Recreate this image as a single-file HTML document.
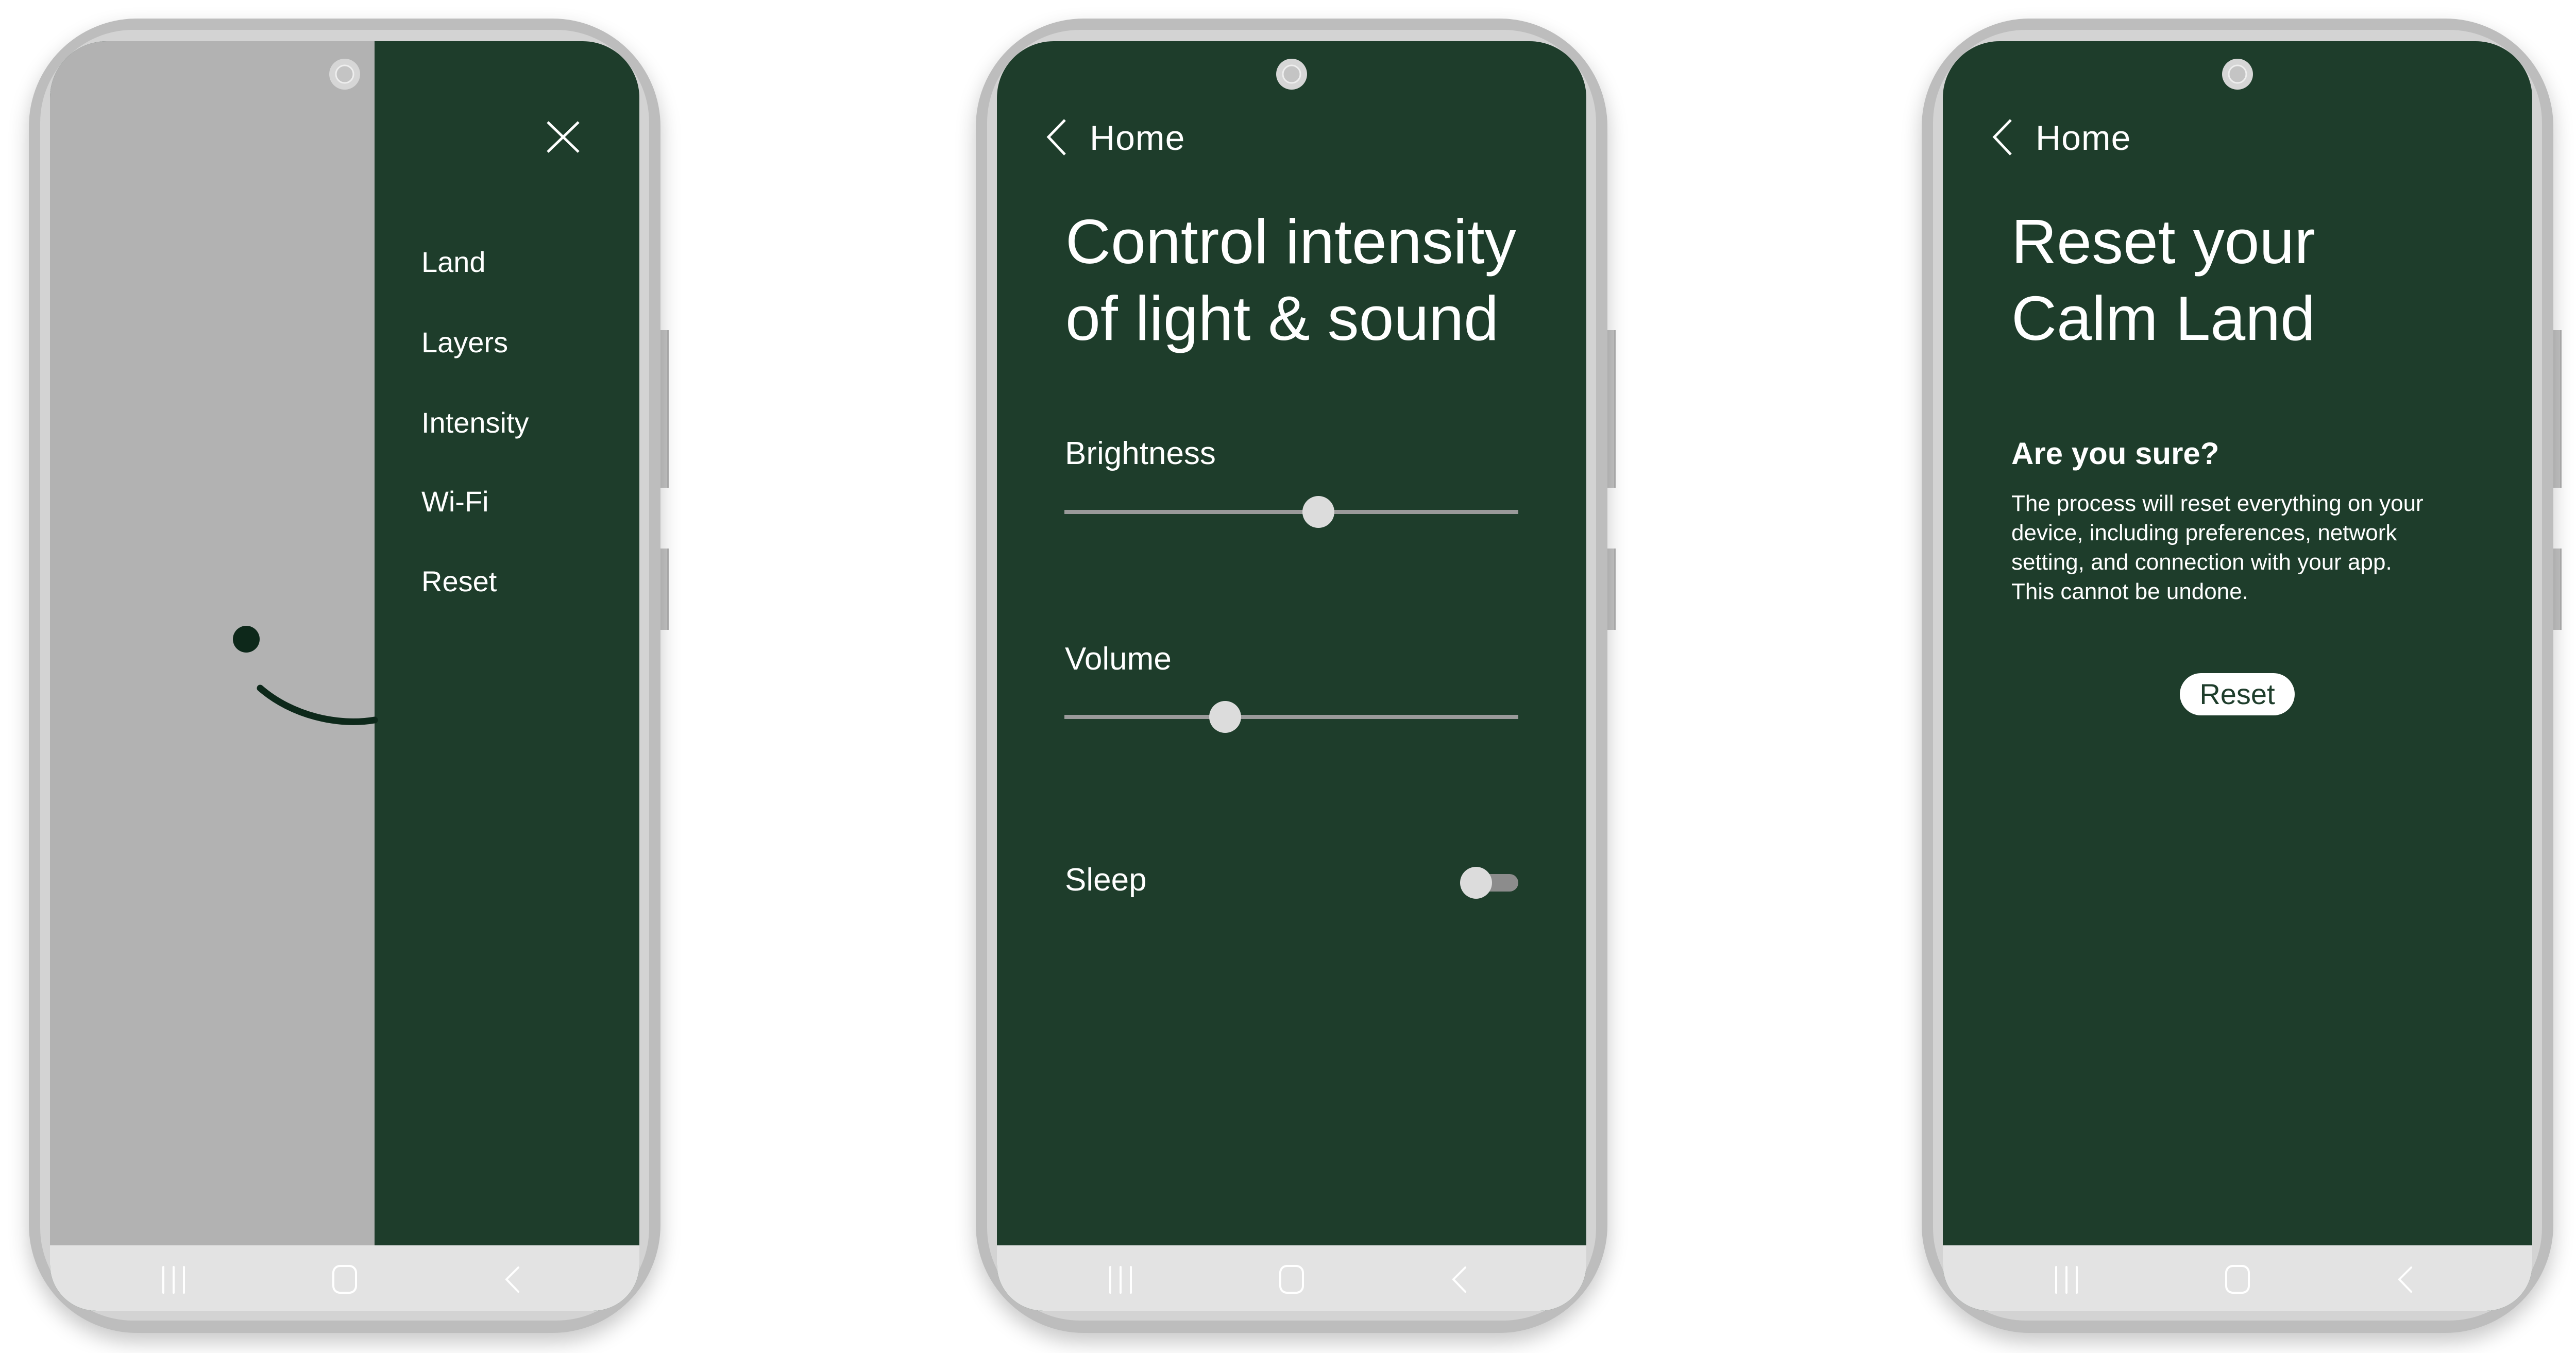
<!DOCTYPE html>
<html><head><meta charset="utf-8"><style>
*{margin:0;padding:0;box-sizing:border-box}
body{width:5021px;height:2627px;background:#fff;position:relative;overflow:hidden;font-family:"Liberation Sans",sans-serif}
.ph{position:absolute;top:0;width:1340px;height:2627px}
.ab{position:absolute}
.outer{left:56px;top:36px;width:1226px;height:2552px;border-radius:210px;background:#bdbdbd;box-shadow:0 18px 40px rgba(0,0,0,.22)}
.ring{left:78px;top:58px;width:1182px;height:2506px;border-radius:180px;background:#d3d3d3}
.btn{left:1280px;width:18px;background:#c4c4c4;border-right:3px solid #b0b0b0}
.screen{left:97px;top:80px;width:1144px;height:2465px;border-radius:110px 110px 90px 90px;overflow:hidden;background:#1e3d2b}
.nav{left:0;top:2338px;width:1144px;height:127px;background:#e3e3e3}
.w{color:#fff;white-space:nowrap}
</style></head><body>

<!-- PHONE 1 -->
<div class="ph" style="left:0">
  <div class="ab btn" style="top:641px;height:306px"></div>
  <div class="ab btn" style="top:1065px;height:158px"></div>
  <div class="ab outer"></div>
  <div class="ab ring"></div>
  <div class="ab screen">
    <div class="ab" style="left:0;top:0;width:630px;height:2338px;background:#b2b2b2"></div>
    <svg class="ab" style="left:0;top:0" width="1144" height="2338">
      <circle cx="381" cy="1161" r="26" fill="#0d281a"/>
      <path d="M408,1256 C470,1310 560,1330 630,1318" stroke="#0d281a" stroke-width="13" fill="none" stroke-linecap="round"/>
      <path d="M966,157 L1026,215 M1026,157 L966,215" stroke="#fff" stroke-width="5"/>
    </svg>
    <div class="ab w" style="left:721px;top:401px;font-size:56px;line-height:56px">Land</div>
    <div class="ab w" style="left:721px;top:557px;font-size:56px;line-height:56px">Layers</div>
    <div class="ab w" style="left:721px;top:713px;font-size:56px;line-height:56px">Intensity</div>
    <div class="ab w" style="left:721px;top:866px;font-size:56px;line-height:56px">Wi-Fi</div>
    <div class="ab w" style="left:721px;top:1021px;font-size:56px;line-height:56px">Reset</div>
    <div class="ab nav"></div>
    <svg class="ab" style="left:0;top:2338px" width="1144" height="127">
      <g stroke="#fff" stroke-width="4" fill="none" stroke-linecap="round">
        <path d="M220,42 V92 M240,42 V92 M260,42 V92"/>
        <rect x="550" y="40" width="44" height="52" rx="13"/>
        <path d="M909,43 L886,66 L909,90"/>
      </g>
    </svg>
  </div>
  <svg class="ab" style="left:637px;top:112px" width="64" height="64"><circle cx="32" cy="32" r="30" fill="#d6d6d6"/><circle cx="32" cy="32" r="17" fill="#c4c4c4" stroke="#eee" stroke-width="3"/></svg>
</div>

<!-- PHONE 2 -->
<div class="ph" style="left:1838px">
  <div class="ab btn" style="top:641px;height:306px"></div>
  <div class="ab btn" style="top:1065px;height:158px"></div>
  <div class="ab outer"></div>
  <div class="ab ring"></div>
  <div class="ab screen">
    <svg class="ab" style="left:0;top:0" width="1144" height="2338">
      <path d="M132,153 L100,186 L132,220" stroke="#fff" stroke-width="5" fill="none"/>
      <line x1="131" y1="914" x2="1012" y2="914" stroke="#9a9a9a" stroke-width="8"/>
      <circle cx="624" cy="914" r="31" fill="#dcdcdc"/>
      <line x1="131" y1="1312" x2="1012" y2="1312" stroke="#9a9a9a" stroke-width="8"/>
      <circle cx="443" cy="1312" r="31" fill="#dcdcdc"/>
      <rect x="930" y="1617" width="82" height="34" rx="17" fill="#8c8c8c"/>
      <circle cx="930" cy="1634" r="31" fill="#dcdcdc"/>
    </svg>
    <div class="ab w" style="left:180px;top:154px;font-size:68px;line-height:68px;letter-spacing:1px">Home</div>
    <div class="ab w" style="left:133px;top:328px;font-size:122px;line-height:122px">Control intensity</div>
    <div class="ab w" style="left:133px;top:477px;font-size:122px;line-height:122px">of light &amp; sound</div>
    <div class="ab w" style="left:132px;top:770px;font-size:62px;line-height:62px">Brightness</div>
    <div class="ab w" style="left:132px;top:1169px;font-size:62px;line-height:62px">Volume</div>
    <div class="ab w" style="left:132px;top:1598px;font-size:62px;line-height:62px">Sleep</div>
    <div class="ab nav"></div>
    <svg class="ab" style="left:0;top:2338px" width="1144" height="127">
      <g stroke="#fff" stroke-width="4" fill="none" stroke-linecap="round">
        <path d="M220,42 V92 M240,42 V92 M260,42 V92"/>
        <rect x="550" y="40" width="44" height="52" rx="13"/>
        <path d="M909,43 L886,66 L909,90"/>
      </g>
    </svg>
  </div>
  <svg class="ab" style="left:637px;top:112px" width="64" height="64"><circle cx="32" cy="32" r="30" fill="#d6d6d6"/><circle cx="32" cy="32" r="17" fill="#c4c4c4" stroke="#eee" stroke-width="3"/></svg>
</div>

<!-- PHONE 3 -->
<div class="ph" style="left:3674px">
  <div class="ab btn" style="top:641px;height:306px"></div>
  <div class="ab btn" style="top:1065px;height:158px"></div>
  <div class="ab outer"></div>
  <div class="ab ring"></div>
  <div class="ab screen">
    <svg class="ab" style="left:0;top:0" width="1144" height="300">
      <path d="M132,153 L100,186 L132,220" stroke="#fff" stroke-width="5" fill="none"/>
    </svg>
    <div class="ab w" style="left:180px;top:154px;font-size:68px;line-height:68px;letter-spacing:1px">Home</div>
    <div class="ab w" style="left:133px;top:328px;font-size:122px;line-height:122px">Reset your</div>
    <div class="ab w" style="left:133px;top:477px;font-size:122px;line-height:122px">Calm Land</div>
    <div class="ab w" style="left:133px;top:771px;font-size:60px;line-height:60px;font-weight:bold">Are you sure?</div>
    <div class="ab w" style="left:133px;top:869px;font-size:44px;line-height:57px">The process will reset everything on your<br>device, including preferences, network<br>setting, and connection with your app.<br>This cannot be undone.</div>
    <div class="ab" style="left:460px;top:1227px;width:223px;height:82px;border-radius:41px;background:#fff;color:#1e3d2b;font-size:56px;line-height:82px;text-align:center">Reset</div>
    <div class="ab nav"></div>
    <svg class="ab" style="left:0;top:2338px" width="1144" height="127">
      <g stroke="#fff" stroke-width="4" fill="none" stroke-linecap="round">
        <path d="M220,42 V92 M240,42 V92 M260,42 V92"/>
        <rect x="550" y="40" width="44" height="52" rx="13"/>
        <path d="M909,43 L886,66 L909,90"/>
      </g>
    </svg>
  </div>
  <svg class="ab" style="left:637px;top:112px" width="64" height="64"><circle cx="32" cy="32" r="30" fill="#d6d6d6"/><circle cx="32" cy="32" r="17" fill="#c4c4c4" stroke="#eee" stroke-width="3"/></svg>
</div>

</body></html>
